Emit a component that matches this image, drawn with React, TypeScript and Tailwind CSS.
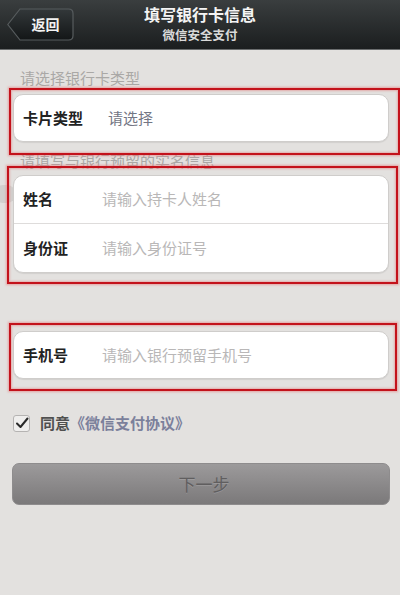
import React from "react";

const font = { fontFamily: '"Noto Sans CJK SC", "Noto Sans", sans-serif' };

function RedBox({ cls }: { cls: string }) {
  return (
    <div
      className={`pointer-events-none absolute border-2 border-[#c3121b] shadow-[0_0_2px_1px_rgba(230,120,120,0.6),inset_0_0_2px_1px_rgba(230,120,120,0.5)] ${cls}`}
    />
  );
}

function Row({ label, placeholder, last }: { label: string; placeholder: string; last?: boolean }) {
  return (
    <div className={`flex h-[48px] items-center ${last ? "" : "border-b border-[#dedcdb]"}`}>
      <span className="w-[88px] pl-[9px] text-[15px] font-bold text-[#222]">{label}</span>
      <span className="text-[15px] text-[#b9b7b7]">{placeholder}</span>
    </div>
  );
}

export default function App() {
  return (
    <div style={font} className="relative h-[595px] w-[400px] overflow-hidden bg-[#e3e1df]">
      {/* header */}
      <div className="relative flex h-[50px] flex-col items-center border-b border-[#6a6d6e] bg-gradient-to-b from-[#3a3e3f] to-[#1b1e1f] pt-[3px]">
        <div className="absolute left-[7px] top-[8px] flex h-[33px] w-[67px] items-center justify-center">
          <svg className="absolute inset-0" width="67" height="33" viewBox="0 0 67 33">
            <defs>
              <linearGradient id="bb" x1="0" y1="0" x2="0" y2="1">
                <stop offset="0" stopColor="#33383a" />
                <stop offset="1" stopColor="#131617" />
              </linearGradient>
            </defs>
            <path
              d="M0.8 16.5 L13 1 H61.5 Q66 1 66 5.5 V27.5 Q66 32 61.5 32 H13 Z"
              fill="url(#bb)"
              stroke="#575c5e"
              strokeWidth="1.2"
            />
          </svg>
          <span className="relative ml-[10px] text-[14px] font-bold text-[#f2f2f2]">返回</span>
        </div>
        <div className="text-[16px] font-bold leading-[22px] text-[#f4f4f4]">填写银行卡信息</div>
        <div className="mt-[1px] text-[12.5px] font-bold leading-[18px] text-[#d9d9d9]">微信安全支付</div>
      </div>

      {/* left artifact */}
      <div className="absolute left-[-6px] top-[185px] h-[18px] w-[22px] rounded-full bg-[#d2d0ce]" />

      <div className="flex flex-col">
        <div className="mt-[17px] pl-[20px] text-[15px] leading-[22px] text-[#aaa8a6]">请选择银行卡类型</div>

        <div className="relative ml-[13px] mt-[5px] w-[376px]">
          <div className="flex h-[48px] items-center rounded-[10px] border border-[#cfcdcb] bg-white shadow-[0_1px_1px_rgba(0,0,0,0.08)]">
            <span className="w-[94px] pl-[9px] text-[15px] font-bold text-[#222]">卡片类型</span>
            <span className="text-[15px] text-[#737684]">请选择</span>
          </div>
          <RedBox cls="left-[-4px] top-[-6px] right-[-11px] bottom-[-13px]" />
        </div>

        <div className="mt-[8px] pl-[20px] text-[15px] leading-[22px] text-[#aaa8a6]">请填写与银行预留的实名信息</div>

        <div className="relative ml-[13px] mt-[3px] w-[376px]">
          <div className="rounded-[10px] border border-[#cfcdcb] bg-white shadow-[0_1px_1px_rgba(0,0,0,0.08)]">
            <Row label="姓名" placeholder="请输入持卡人姓名" />
            <Row label="身份证" placeholder="请输入身份证号" last />
          </div>
          <RedBox cls="left-[-6px] top-[-9px] right-[-9px] bottom-[-11px]" />
        </div>

        <div className="relative ml-[13px] mt-[58px] w-[376px]">
          <div className="rounded-[10px] border border-[#cfcdcb] bg-white shadow-[0_1px_1px_rgba(0,0,0,0.08)]">
            <div className="flex h-[46px] items-center">
              <span className="w-[88px] pl-[9px] text-[15px] font-bold text-[#222]">手机号</span>
              <span className="text-[15px] text-[#b9b7b7]">请输入银行预留手机号</span>
            </div>
          </div>
          <RedBox cls="left-[-4px] top-[-8px] right-[-8px] bottom-[-12px]" />
        </div>

        <div className="mt-[33px] flex items-center pl-[13px]">
          <div className="flex h-[17px] w-[17px] items-center justify-center rounded-[3px] border border-[#b5b3b2] bg-[#efeeed]">
            <svg width="14" height="14" viewBox="0 0 14 14">
              <path d="M2 7.5 L5.5 11 L12.5 2.5" fill="none" stroke="#2a2a2a" strokeWidth="2" strokeLinecap="round" strokeLinejoin="round" />
            </svg>
          </div>
          <span className="ml-[10px] text-[15px] font-bold text-[#505050]">同意</span>
          <span className="text-[15px] font-bold text-[#7b809b]">《微信支付协议》</span>
        </div>

        <div className="ml-[12px] mt-[28px] flex h-[42px] w-[378px] items-center justify-center rounded-[7px] border border-[#8e8c8d] bg-gradient-to-b from-[#9c9a9b] to-[#7b797a]">
          <span className="ml-[6px] text-[17px] text-[#605e5f] [text-shadow:0_1px_0_rgba(255,255,255,0.15)]">下一步</span>
        </div>
      </div>
    </div>
  );
}
